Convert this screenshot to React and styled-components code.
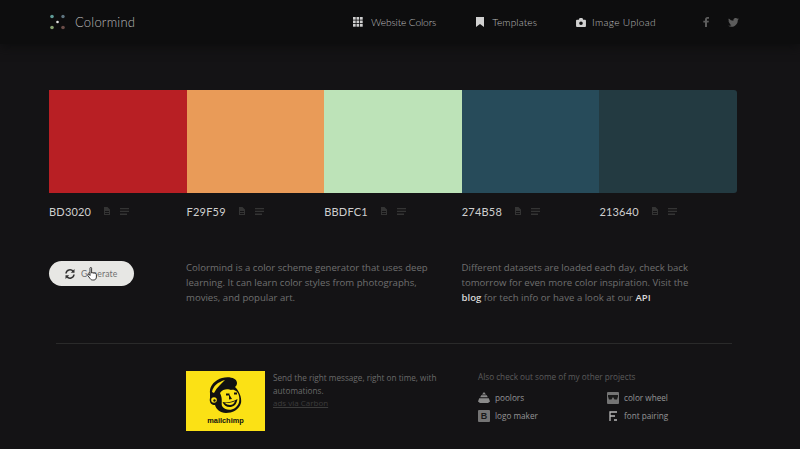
import React from "react";
import styled, { createGlobalStyle } from "styled-components";

const Global = createGlobalStyle`
  html, body { margin: 0; padding: 0; background: #141315; height: 449px; overflow: hidden; }
  * { box-sizing: border-box; }
`;

const Page = styled.div`
  width: 800px;
  height: 449px;
  overflow: hidden;
  background: #141315;
  font-family: "Open Sans", sans-serif;
  display: flex;
  flex-direction: column;
`;

const Header = styled.header`
  height: 44px;
  background: #0d0d0e;
  box-shadow: 0 3px 10px #0d0d0e;
  display: flex;
  align-items: center;
  padding: 0 61px 0 49px;
`;

const Brand = styled.div`
  display: flex;
  align-items: center;
  gap: 10px;
  flex: 1;
  font-family: Lato, sans-serif;
  font-weight: 300;
  font-size: 13px;
  letter-spacing: 0.2px;
  color: #b8b8b8;
`;

const NavLink = styled.a`
  display: flex;
  align-items: center;
  gap: ${(p) => p.$inner}px;
  margin-right: ${(p) => p.$gap}px;
  font-family: Lato, sans-serif;
  font-weight: 300;
  font-size: 10.2px;
  letter-spacing: ${(p) => p.$track}px;
  color: #bcbcbc;
`;

const Social = styled.span`
  display: flex;
  margin-left: ${(p) => p.$left}px;
  color: #5c5c5c;
`;

const Palette = styled.div`
  display: flex;
  width: 688px;
  height: 103px;
  margin: 46px 0 0 49px;
`;

const Swatch = styled.div`
  width: ${(p) => p.$w}px;
  background: ${(p) => p.$c};
  border-radius: ${(p) => (p.$last ? "0 3px 3px 0" : "0")};
`;

const Codes = styled.div`
  display: flex;
  margin: 10px 0 0 49px;
`;

const Code = styled.div`
  width: 137.6px;
  display: flex;
  align-items: center;
  height: 16px;
  color: #cfcfcf;
  font-family: Lato, sans-serif;
  font-size: 11px;
  letter-spacing: 0.2px;
`;

const CodeIcons = styled.span`
  display: flex;
  align-items: center;
  gap: 10px;
  margin-left: 12px;
  color: #343434;
`;

const Intro = styled.section`
  display: grid;
  grid-template-columns: 137px 275.5px 270px;
  margin: 41px 0 0 49px;
`;

const Generate = styled.button`
  width: 85px;
  height: 25px;
  margin-top: 1px;
  border: 0;
  padding: 0 0 0 16px;
  border-radius: 13px;
  background: #e7e7e4;
  color: #707070;
  font-family: Lato, sans-serif;
  font-size: 8.6px;
  letter-spacing: 0.2px;
  display: flex;
  align-items: center;
  gap: 6px;
  position: relative;
`;

const Cursor = styled.svg`
  position: absolute;
  left: 38px;
  top: 6px;
`;

const Copy = styled.p`
  margin: 0;
  font-size: 9.6px;
  line-height: 15px;
  color: #6f6f6f;
  white-space: nowrap;
  & b { color: #d8d8d8; font-weight: 600; }
`;

const Rule = styled.hr`
  width: 676px;
  height: 1px;
  border: 0;
  margin: 38px 0 0 56px;
  background: #2a2a2a;
`;

const Footer = styled.footer`
  display: grid;
  grid-template-columns: 79px 205px 260px;
  column-gap: 0;
  margin: 27px 0 0 186px;
`;

const Ad = styled.div`
  width: 79px;
  height: 60px;
  background: #fbe115;
  display: flex;
  flex-direction: column;
  align-items: center;
  gap: 3px;
  color: #111;
  font-family: "Liberation Sans", sans-serif;
  font-size: 7.4px;
  font-weight: 700;
  line-height: 8px;
  padding-top: 6px;
`;

const AdBody = styled.div`
  padding-left: 8px;
  font-size: 8.2px;
  line-height: 13px;
  color: #6a6a6a;
  white-space: nowrap;
`;

const AdCredit = styled.div`
  font-size: 8px;
  line-height: 11px;
  color: #3c3c3c;
  text-decoration: underline;
`;

const Projects = styled.div`
  padding-left: 8px;
`;

const ProjectsTitle = styled.div`
  font-size: 8.2px;
  line-height: 12px;
  color: #5c5c5c;
  margin-bottom: 7px;
`;

const ProjectGrid = styled.div`
  display: grid;
  grid-template-columns: 129px 90px;
  row-gap: 3px;
`;

const Project = styled.div`
  display: flex;
  align-items: center;
  gap: 5px;
  height: 15px;
  font-size: 8.2px;
  color: #959595;
`;

const ProjectIcon = styled.span`
  width: 12px;
  height: 12px;
  flex: none;
  display: flex;
  align-items: center;
  justify-content: center;
  border-radius: 1px;
  background: ${(p) => (p.$box ? "#747474" : "transparent")};
  color: ${(p) => (p.$box ? "#1a1a1a" : "#8a8a8a")};
  font-family: "Liberation Sans", sans-serif;
  font-size: 9px;
  font-weight: 700;
`;

const Logo = () => (
  <svg width="16" height="16" viewBox="0 0 16 16">
    <circle cx="3" cy="2.500" r="1.800" fill="#5f9c98" />
    <circle cx="14" cy="2.500" r="1.700" fill="#5f7480" />
    <circle cx="8.500" cy="8" r="1.300" fill="#e6e6e6" />
    <circle cx="3" cy="13.500" r="1.800" fill="#86a070" />
    <circle cx="14" cy="13.500" r="1.800" fill="#6a4c48" />
  </svg>
);

const GridIcon = () => (
  <svg width="10" height="10" viewBox="0 0 10 10" fill="#cfcfcf">
    {[0, 3.5, 7].flatMap((y) =>
      [0, 3.5, 7].map((x) => <rect key={`${x}-${y}`} x={x} y={y} width="2.7" height="2.7" />)
    )}
  </svg>
);

const BookmarkIcon = () => (
  <svg width="8" height="10" viewBox="0 0 8 10" fill="#d0d0d0">
    <path d="M0 0h8v10L4 7 0 10z" />
  </svg>
);

const CameraIcon = () => (
  <svg width="10" height="9" viewBox="0 0 11 10">
    <path fill="#d0d0d0" fillRule="evenodd" d="M1 2h2l1-2h3l1 2h2a1 1 0 0 1 1 1v6a1 1 0 0 1-1 1H1a1 1 0 0 1-1-1V3a1 1 0 0 1 1-1zm4.500 1.800a2 2 0 1 0 0 4 2 2 0 0 0 0-4z" />
  </svg>
);

const Facebook = () => (
  <svg width="6" height="10" viewBox="0 0 6 10" fill="currentColor">
    <path d="M2 10V5.600H.3V3.800H2V2.500C2 .9 3 0 4.400 0H6v1.800H4.900c-.7 0-.9.4-.9.9v1.100h1.900l-.3 1.800H4V10z" />
  </svg>
);

const Twitter = () => (
  <svg width="11" height="9" viewBox="0 0 24 20" fill="currentColor">
    <path d="M24 2.400c-.9.4-1.800.7-2.800.8 1-.6 1.800-1.600 2.200-2.700-1 .6-2 1-3.100 1.200A4.900 4.900 0 0 0 11.900 6.200 14 14 0 0 1 1.700.9a4.900 4.900 0 0 0 1.500 6.600c-.8 0-1.600-.2-2.200-.6 0 2.400 1.700 4.400 3.900 4.900-.7.2-1.500.2-2.200.1.600 2 2.400 3.400 4.600 3.400A9.900 9.900 0 0 1 0 17.300 14 14 0 0 0 21.500 4.900c1-.7 1.800-1.500 2.500-2.500z" />
  </svg>
);

const Doc = () => (
  <svg width="7" height="8" viewBox="0 0 7 8" fill="currentColor">
    <path fillRule="evenodd" d="M1 0h3.500L7 2.500V8H1zM2 4v1h4V4zm0 2v1h4V6z" />
  </svg>
);

const Lines = () => (
  <svg width="9" height="7" viewBox="0 0 9 7" fill="currentColor">
    <path d="M0 0h9v1.300H0zM0 2.800h9v1.300H0zM0 5.600h7V7H0z" />
  </svg>
);

const Refresh = () => (
  <svg width="10" height="10" viewBox="0 0 10 10" fill="none" stroke="#333" strokeWidth="1.500">
    <path d="M1 4.500A4 4 0 0 1 8.200 2.500M9 5.500A4 4 0 0 1 1.800 7.500" />
    <path fill="#333" stroke="none" d="M9.500 0v3.700H5.800zM.5 10V6.300h3.700z" />
  </svg>
);

const Hand = () => (
  <Cursor width="11" height="14" viewBox="0 0 11 14">
    <path fill="#fff" stroke="#222" strokeWidth="0.900" d="M3 1.200c0-1 1.600-1 1.600 0V6l.6-.2c.8-.2 1.200 0 1.400.4.600-.3 1.200-.1 1.400.4.700-.2 1.400.2 1.400 1V10c0 1.600-1 3-2.500 3H5.500C4 13 3.400 12 2.700 11L.8 8.500c-.6-.9.600-1.800 1.300-1L3 8.500z" />
  </Cursor>
);

const Chimp = () => (
  <svg width="35" height="37" viewBox="0 0 35 37">
    <path fill="#111" d="M2 16C1 9 7 3 14 1c7-2 15 0 15 5 0 2-1 3-2 4 4 4 7 10 6 16-2 7-9 10-15 10-6 0-10-4-11-8-4 0-6-3-5-7 0-2 0-3 0-5z" />
    <path fill="#fbe115" d="M4 15c1-6 6-10 13-12-3 3-8 7-11 13z" />
    <circle cx="6" cy="23" r="2.800" fill="#fbe115" />
    <circle cx="6.500" cy="23.500" r="1.200" fill="#111" />
    <path fill="#fbe115" d="M12 16c3-5 9-4 11-3 3-1 7 1 8 6 1 5 0 9-4 12-4 3-11 2-13-2-1-3 1-7-2-13z" />
    <path fill="#111" d="M18 16.500h3.500v2H18zM26 15.500h3v2h-3zM21 17l3 5-3 .5zM14.500 25c4 1 10 0 15-3-1 6-4 8-8 8-3 0-6-2-7-5z" />
    <path fill="#fbe115" d="M17 26c3 .3 7-.3 10-2-1 3-3 4-5 4-2 0-4-1-5-2z" />
  </svg>
);

const Poolors = () => (
  <svg width="12" height="11" viewBox="0 0 12 11" fill="currentColor">
    <path d="M6 0l2 2.500H4zM3.200 3.300h5.600l1 2H2.200zM1.200 6.200h9.600L12 9.500 10 11H2L0 9.500z" />
  </svg>
);

const Glasses = () => (
  <svg width="10" height="5" viewBox="0 0 10 5" fill="currentColor">
    <path d="M0 0h10v1.500L9 4.500H6.500L5 2 3.500 4.500H1L0 1.500z" />
  </svg>
);

const FontIcon = () => (
  <svg width="9" height="10" viewBox="0 0 9 10">
    <path fill="none" stroke="#b8b8b8" strokeWidth="1.300" d="M1 10V1h7M1 5h5M5 9h3" />
  </svg>
);

const swatches = [
  ["#B81F24", 137.6, "BD3020"],
  ["#E99B58", 137.6, "F29F59"],
  ["#BDE3B8", 137.6, "BBDFC1"],
  ["#274B5A", 137.6, "274B58"],
  ["#233A41", 137.6, "213640"],
];

export default function App() {
  return (
    <Page>
      <Global />
      <Header>
        <Brand>
          <Logo />
          <span>Colormind</span>
        </Brand>
        <NavLink $gap={40} $inner={8} $track={-0.15}><GridIcon />Website Colors</NavLink>
        <NavLink $gap={39} $inner={8} $track={0.1}><BookmarkIcon />Templates</NavLink>
        <NavLink $gap={0} $inner={6} $track={0.3}><CameraIcon />Image Upload</NavLink>
        <Social $left={47}><Facebook /></Social>
        <Social $left={19}><Twitter /></Social>
      </Header>
      <Palette>
        {swatches.map(([c, w], i) => (
          <Swatch key={c} $c={c} $w={w} $last={i === 4} />
        ))}
      </Palette>
      <Codes>
        {swatches.map(([c, , label]) => (
          <Code key={label}>
            {label}
            <CodeIcons>
              <Doc />
              <Lines />
            </CodeIcons>
          </Code>
        ))}
      </Codes>
      <Intro>
        <div>
          <Generate>
            <Refresh />
            Generate
            <Hand />
          </Generate>
        </div>
        <Copy>
          Colormind is a color scheme generator that uses deep
          <br />
          learning. It can learn color styles from photographs,
          <br />
          movies, and popular art.
        </Copy>
        <Copy>
          Different datasets are loaded each day, check back
          <br />
          tomorrow for even more color inspiration. Visit the
          <br />
          <b>blog</b> for tech info or have a look at our <b>API</b>
        </Copy>
      </Intro>
      <Rule />
      <Footer>
        <Ad>
          <Chimp />
          <span>mailchimp</span>
        </Ad>
        <AdBody>
          Send the right message, right on time, with
          <br />
          automations.
          <AdCredit>ads via Carbon</AdCredit>
        </AdBody>
        <Projects>
          <ProjectsTitle>Also check out some of my other projects</ProjectsTitle>
          <ProjectGrid>
            <Project><ProjectIcon><Poolors /></ProjectIcon>poolors</Project>
            <Project><ProjectIcon $box><Glasses /></ProjectIcon>color wheel</Project>
            <Project><ProjectIcon $box>B</ProjectIcon>logo maker</Project>
            <Project><ProjectIcon><FontIcon /></ProjectIcon>font pairing</Project>
          </ProjectGrid>
        </Projects>
      </Footer>
    </Page>
  );
}
